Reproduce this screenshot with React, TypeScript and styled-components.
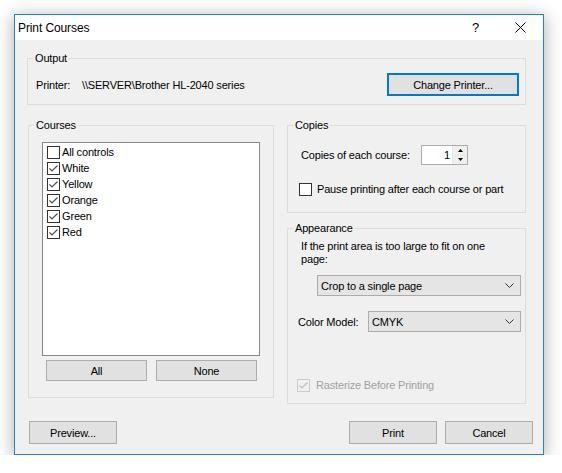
import React from "react";
import styled, { createGlobalStyle, css } from "styled-components";

const GlobalStyle = createGlobalStyle`
  html, body { margin: 0; padding: 0; background: #ffffff; }
  body {
    font-family: "Liberation Sans", Arial, sans-serif;
    font-size: 11px;
    letter-spacing: -0.17px;
    color: #000;
  }
  * { box-sizing: border-box; }
`;

const Page = styled.div`
  padding: 14px 0 0 14px;
`;

const Window = styled.div`
  width: 530px;
  height: 441px;
  border: 1px solid #1883d7;
  background: #f0f0f0;
  box-shadow: 0 3px 16px 1px rgba(0, 0, 0, 0.3);
  display: flex;
  flex-direction: column;
`;

const TitleBar = styled.div`
  height: 25px;
  background: #ffffff;
  display: flex;
  align-items: center;
  padding-left: 3px;
  flex-shrink: 0;
`;

const Title = styled.span`
  font-size: 12px;
  letter-spacing: -0.1px;
  flex: 1;
`;

const TitleButton = styled.div`
  width: 45px;
  height: 25px;
  display: flex;
  align-items: center;
  justify-content: center;
  font-size: 13px;
`;

const Content = styled.div`
  flex: 1;
  padding: 18px 17px 0 12px;
  display: flex;
  flex-direction: column;
`;

const GroupBox = styled.div<{ $w?: number; $h: number; $ml?: number }>`
  position: relative;
  border: 1px solid #dcdcdc;
  width: ${(p) => (p.$w ? `${p.$w}px` : "auto")};
  height: ${(p) => p.$h}px;
  margin-left: ${(p) => p.$ml ?? 0}px;
  flex-shrink: 0;
`;

const Legend = styled.span`
  position: absolute;
  top: -7px;
  left: 5px;
  padding: 0 2px;
  line-height: 13px;
  background: #f0f0f0;
`;

const OutputBody = styled.div`
  display: flex;
  align-items: center;
  padding: 14px 6px 0 8px;
`;

const PrinterLabel = styled.span`
  width: 46px;
`;

const Spacer = styled.div`
  flex: 1;
`;

const Button = styled.div<{ $w: number; $h?: number; $default?: boolean }>`
  width: ${(p) => p.$w}px;
  height: ${(p) => p.$h ?? 23}px;
  background: #e1e1e1;
  border: 1px solid #adadad;
  display: flex;
  align-items: center;
  justify-content: center;
  flex-shrink: 0;
  ${(p) =>
    p.$default &&
    css`
      border: 2px solid #0078d7;
    `}
`;

const MiddleRow = styled.div`
  display: flex;
  align-items: flex-start;
  margin-top: 20px;
`;

const CoursesBody = styled.div`
  padding: 16px 13px 0 13px;
`;

const ListBox = styled.div`
  height: 214px;
  border: 1px solid #828790;
  background: #ffffff;
  padding: 1px 0 0 4px;
`;

const ListRow = styled.div`
  height: 16px;
  display: flex;
  align-items: center;
  gap: 2px;
`;

const ListButtons = styled.div`
  display: flex;
  justify-content: space-between;
  padding: 0 3px 0 4px;
  margin-top: 4px;
`;

const RightColumn = styled.div`
  width: 239px;
  margin-left: 13px;
  display: flex;
  flex-direction: column;
  gap: 15px;
`;

const CopiesBody = styled.div`
  padding: 19px 0 0 11px;
`;

const SpinRow = styled.div`
  height: 20px;
  display: flex;
  align-items: center;
  padding-left: 2px;
`;

const SpinLabel = styled.span`
  width: 120px;
`;

const SpinBox = styled.div`
  width: 47px;
  height: 20px;
  border: 1px solid #acacac;
  background: #fff;
  display: flex;
`;

const SpinValue = styled.div`
  flex: 1;
  text-align: right;
  padding-right: 2px;
  line-height: 18px;
`;

const SpinButtons = styled.div`
  width: 15px;
  display: flex;
  flex-direction: column;
  border-left: 1px solid #e6e6e6;
  background: #f0f0f0;
`;

const SpinHalf = styled.div`
  flex: 1;
  display: flex;
  align-items: center;
  justify-content: center;
  &:first-child {
    border-bottom: 1px solid #e6e6e6;
  }
`;

const CheckRow = styled.div<{ $mt?: number; $ml?: number; $gap?: number; $disabled?: boolean }>`
  height: 16px;
  display: flex;
  align-items: center;
  gap: ${(p) => p.$gap ?? 5}px;
  margin-top: ${(p) => p.$mt ?? 0}px;
  margin-left: ${(p) => p.$ml ?? 0}px;
  color: ${(p) => (p.$disabled ? "#a0a0a0" : "#000")};
`;

const Box = styled.div<{ $disabled?: boolean }>`
  width: 13px;
  height: 13px;
  border: 1px solid ${(p) => (p.$disabled ? "#cccccc" : "#333333")};
  background: ${(p) => (p.$disabled ? "#f0f0f0" : "#ffffff")};
  flex-shrink: 0;
  display: flex;
  align-items: center;
  justify-content: center;
`;

const AppearanceBody = styled.div`
  padding: 11px 0 0 0;
`;

const WrapText = styled.div`
  line-height: 13px;
  padding-left: 13px;
`;

const SelectRow = styled.div<{ $mt: number; $pl: number }>`
  display: flex;
  align-items: center;
  margin-top: ${(p) => p.$mt}px;
  padding-left: ${(p) => p.$pl}px;
`;

const SelectLabel = styled.span`
  width: 70px;
`;

const Select = styled.div<{ $w: number }>`
  width: ${(p) => p.$w}px;
  height: 21px;
  border: 1px solid #acacac;
  background: #e5e5e5;
  display: flex;
  align-items: center;
  padding: 0 6px 0 3px;
`;

const SelectText = styled.span`
  flex: 1;
`;

const BottomRow = styled.div`
  display: flex;
  align-items: center;
  margin: 17px -7px 0 2px;
  gap: 8px;
`;

const CloseIcon = () => (
  <svg width="11" height="11" viewBox="0 0 11 11">
    <path d="M0.5 0.5 L10.5 10.5 M10.5 0.5 L0.5 10.5" stroke="#000" strokeWidth="1" fill="none" />
  </svg>
);

const Chevron = () => (
  <svg width="9" height="5" viewBox="0 0 9 5">
    <path d="M0.5 0.5 L4.5 4.5 L8.5 0.5" stroke="#333" strokeWidth="1" fill="none" />
  </svg>
);

const Arrow = ({ up }: { up?: boolean }) => (
  <svg width="5" height="3" viewBox="0 0 5 3">
    <path d={up ? "M0 3 L2.5 0 L5 3 Z" : "M0 0 L2.5 3 L5 0 Z"} fill="#000" />
  </svg>
);

const CheckBox = ({ checked, disabled }: { checked?: boolean; disabled?: boolean }) => (
  <Box $disabled={disabled}>
    {checked && (
      <svg width="11" height="11" viewBox="0 0 11 11">
        <path
          d="M1.5 5.5 L4 8 L9.5 2.5"
          stroke={disabled ? "#bcbcbc" : "#4a4a4a"}
          strokeWidth="1.1"
          fill="none"
        />
      </svg>
    )}
  </Box>
);

const courses = [
  { name: "All controls", checked: false },
  { name: "White", checked: true },
  { name: "Yellow", checked: true },
  { name: "Orange", checked: true },
  { name: "Green", checked: true },
  { name: "Red", checked: true },
];

export default function App() {
  return (
    <>
      <GlobalStyle />
      <Page>
        <Window>
          <TitleBar>
            <Title>Print Courses</Title>
            <TitleButton>?</TitleButton>
            <TitleButton>
              <CloseIcon />
            </TitleButton>
          </TitleBar>
          <Content>
            <GroupBox $h={47}>
              <Legend>Output</Legend>
              <OutputBody>
                <PrinterLabel>Printer:</PrinterLabel>
                <span>\\SERVER\Brother HL-2040 series</span>
                <Spacer />
                <Button $w={132} $default>
                  Change Printer...
                </Button>
              </OutputBody>
            </GroupBox>

            <MiddleRow>
              <GroupBox $w={246} $h={273} $ml={1}>
                <Legend>Courses</Legend>
                <CoursesBody>
                  <ListBox>
                    {courses.map((c) => (
                      <ListRow key={c.name}>
                        <CheckBox checked={c.checked} />
                        <span>{c.name}</span>
                      </ListRow>
                    ))}
                  </ListBox>
                  <ListButtons>
                    <Button $w={101} $h={21}>All</Button>
                    <Button $w={101} $h={21}>None</Button>
                  </ListButtons>
                </CoursesBody>
              </GroupBox>

              <RightColumn>
                <GroupBox $h={88}>
                  <Legend>Copies</Legend>
                  <CopiesBody>
                    <SpinRow>
                      <SpinLabel>Copies of each course:</SpinLabel>
                      <SpinBox>
                        <SpinValue>1</SpinValue>
                        <SpinButtons>
                          <SpinHalf>
                            <Arrow up />
                          </SpinHalf>
                          <SpinHalf>
                            <Arrow />
                          </SpinHalf>
                        </SpinButtons>
                      </SpinBox>
                    </SpinRow>
                    <CheckRow $mt={16}>
                      <CheckBox />
                      <span>Pause printing after each course or part</span>
                    </CheckRow>
                  </CopiesBody>
                </GroupBox>

                <GroupBox $h={176}>
                  <Legend>Appearance</Legend>
                  <AppearanceBody>
                    <WrapText>
                      If the print area is too large to fit on one
                      <br />
                      page:
                    </WrapText>
                    <SelectRow $mt={9} $pl={29}>
                      <Select $w={204}>
                        <SelectText>Crop to a single page</SelectText>
                        <Chevron />
                      </Select>
                    </SelectRow>
                    <SelectRow $mt={15} $pl={10}>
                      <SelectLabel>Color Model:</SelectLabel>
                      <Select $w={153}>
                        <SelectText>CMYK</SelectText>
                        <Chevron />
                      </Select>
                    </SelectRow>
                    <CheckRow $mt={45} $ml={9} $gap={6} $disabled>
                      <CheckBox checked disabled />
                      <span>Rasterize Before Printing</span>
                    </CheckRow>
                  </AppearanceBody>
                </GroupBox>
              </RightColumn>
            </MiddleRow>

            <BottomRow>
              <Button $w={88}>Preview...</Button>
              <Spacer />
              <Button $w={88}>Print</Button>
              <Button $w={88}>Cancel</Button>
            </BottomRow>
          </Content>
        </Window>
      </Page>
    </>
  );
}
